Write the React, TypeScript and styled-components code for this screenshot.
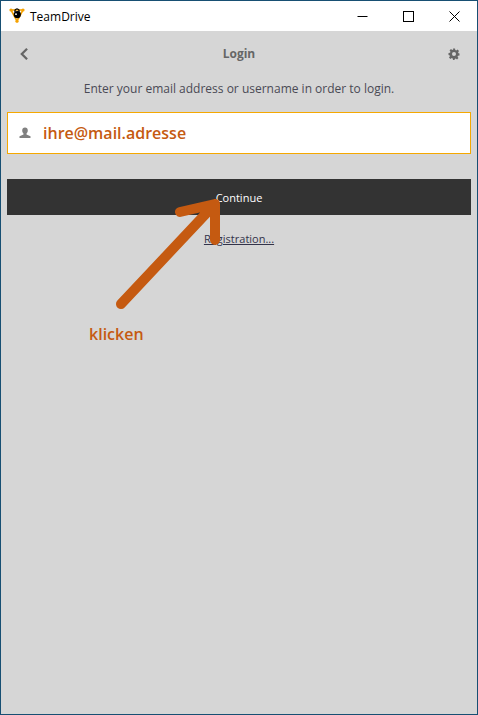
import { createGlobalStyle } from "styled-components"
import styled from "styled-components"

const GlobalStyle = createGlobalStyle`
  html, body {
    margin: 0;
    padding: 0;
    background: #d6d6d6;
  }
`

const App = () => {
  return (
    <>
      <GlobalStyle />
      <Window>
        <TitleBar>
          <AppIcon viewBox="0 0 16 16">
            <path d="M2 3 L14 3 L8 14 Z" fill="none" stroke="#f5a200" strokeWidth="1.6" />
            <circle cx="2" cy="3" r="1.6" fill="#f5a200" />
            <circle cx="14" cy="3" r="1.6" fill="#f5a200" />
            <circle cx="8" cy="14.2" r="1.6" fill="#f5a200" />
            <circle cx="8.3" cy="7.6" r="3.6" fill="#000" />
            <path d="M6 5 V3.2 Q8 0.6 10 3.2 V5" fill="none" stroke="#000" strokeWidth="1.3" />
            <rect x="6.2" y="6.4" width="1.6" height="1.6" fill="#fff" />
          </AppIcon>
          <AppName>TeamDrive</AppName>
          <WindowControls>
            <ControlButton>
              <svg width="11" height="11" viewBox="0 0 11 11">
                <path d="M0.5 5.5 H10.5" stroke="#000" strokeWidth="1" />
              </svg>
            </ControlButton>
            <ControlButton>
              <svg width="11" height="11" viewBox="0 0 11 11">
                <rect x="0.5" y="0.5" width="10" height="10" fill="none" stroke="#000" strokeWidth="1" />
              </svg>
            </ControlButton>
            <ControlButton>
              <svg width="11" height="11" viewBox="0 0 11 11">
                <path d="M0.5 0.5 L10.5 10.5 M10.5 0.5 L0.5 10.5" stroke="#000" strokeWidth="1" />
              </svg>
            </ControlButton>
          </WindowControls>
        </TitleBar>

        <Content>
          <NavBar>
            <NavIcon viewBox="0 0 12 16">
              <path d="M9.5 2 L3.5 8 L9.5 14" fill="none" stroke="#666" strokeWidth="2.6" />
            </NavIcon>
            <NavTitle>Login</NavTitle>
            <NavIcon viewBox="0 0 24 24">
              <path
                fill="#666"
                fillRule="evenodd"
                d="M10 1h4l.6 3.1 1.9.8 2.7-1.8 2.8 2.8-1.8 2.7.8 1.9L23 11v4l-3.1.6-.8 1.9 1.8 2.7-2.8 2.8-2.7-1.8-1.9.8L13 23.9h-3l-.6-3.1-1.9-.8-2.7 1.8L2 19l1.8-2.7-.8-1.9L1 13.8V10l3.1-.6.8-1.9L3.1 4.8 5.9 2l2.7 1.8 1.9-.8zM12 8a4 4 0 1 0 0 8 4 4 0 0 0 0-8z"
              />
            </NavIcon>
          </NavBar>

          <Hint>Enter your email address or username in order to login.</Hint>

          <InputBox>
            <UserIcon viewBox="0 0 12 12">
              <path fill="#808080" d="M6 0.5 C7.8 0.5 8.8 1.8 8.8 3.6 C8.8 5 8.2 6 7.5 6.6 V7.4 L11.5 9.2 V11 H0.5 V9.2 L4.5 7.4 V6.6 C3.8 6 3.2 5 3.2 3.6 C3.2 1.8 4.2 0.5 6 0.5 Z" />
            </UserIcon>
            <EmailText>ihre@mail.adresse</EmailText>
          </InputBox>

          <ContinueButton>Continue</ContinueButton>
          <RegisterLink>Registration...</RegisterLink>
        </Content>

        <Annotation width="478" height="715" viewBox="0 0 478 715">
          <path
            d="M121 304 L215 204 M180 212 L215 204 L215 240"
            fill="none"
            stroke="#c55a11"
            strokeWidth="10"
            strokeLinecap="round"
            strokeLinejoin="round"
          />
        </Annotation>
        <ClickLabel>klicken</ClickLabel>
      </Window>
    </>
  )
}

export default App

const Window = styled.div`
  position: relative;
  box-sizing: border-box;
  width: 478px;
  height: 715px;
  border: 1px solid #174f73;
  background: #d6d6d6;
  overflow: hidden;
  font-family: "Open Sans", "Liberation Sans", sans-serif;
`

const TitleBar = styled.div`
  display: flex;
  align-items: center;
  height: 30px;
  padding-left: 8px;
  background: #fff;
`

const AppIcon = styled.svg`
  width: 16px;
  height: 16px;
  margin-top: -2px;
`

const AppName = styled.div`
  margin-left: 5px;
  font-size: 12px;
  color: #000;
`

const WindowControls = styled.div`
  display: flex;
  margin-left: auto;
`

const ControlButton = styled.div`
  display: flex;
  align-items: center;
  justify-content: center;
  width: 46px;
  height: 30px;
`

const Content = styled.div`
  display: flex;
  flex-direction: column;
  padding: 0 6px;
`

const NavBar = styled.div`
  display: flex;
  align-items: center;
  justify-content: space-between;
  height: 45px;
  padding: 0 11px;
`

const NavIcon = styled.svg`
  width: 12px;
  height: 14px;
`

const NavTitle = styled.div`
  font-size: 12px;
  font-weight: 700;
  color: #666;
`

const Hint = styled.div`
  margin-top: 4px;
  text-align: center;
  font-size: 12px;
  line-height: 17px;
  color: #4a4a55;
`

const InputBox = styled.div`
  display: flex;
  align-items: center;
  box-sizing: border-box;
  height: 42px;
  margin-top: 15px;
  padding-left: 11px;
  border: 1px solid #f5a800;
  background: #fff;
`

const UserIcon = styled.svg`
  width: 12px;
  height: 12px;
`

const EmailText = styled.div`
  margin-left: 12px;
  font-size: 16px;
  font-weight: 600;
  color: #c55a11;
`

const ContinueButton = styled.div`
  display: flex;
  align-items: center;
  justify-content: center;
  height: 36px;
  margin-top: 25px;
  background: #333;
  color: #fff;
  font-size: 11px;
`

const RegisterLink = styled.div`
  align-self: center;
  margin-top: 16px;
  font-size: 11px;
  line-height: 15px;
  color: #33334a;
  text-decoration: underline;
`

const Annotation = styled.svg`
  position: absolute;
  top: -1px;
  left: -1px;
  pointer-events: none;
`

const ClickLabel = styled.div`
  position: absolute;
  top: 322px;
  left: 88px;
  font-size: 16px;
  font-weight: 600;
  color: #c55a11;
`
